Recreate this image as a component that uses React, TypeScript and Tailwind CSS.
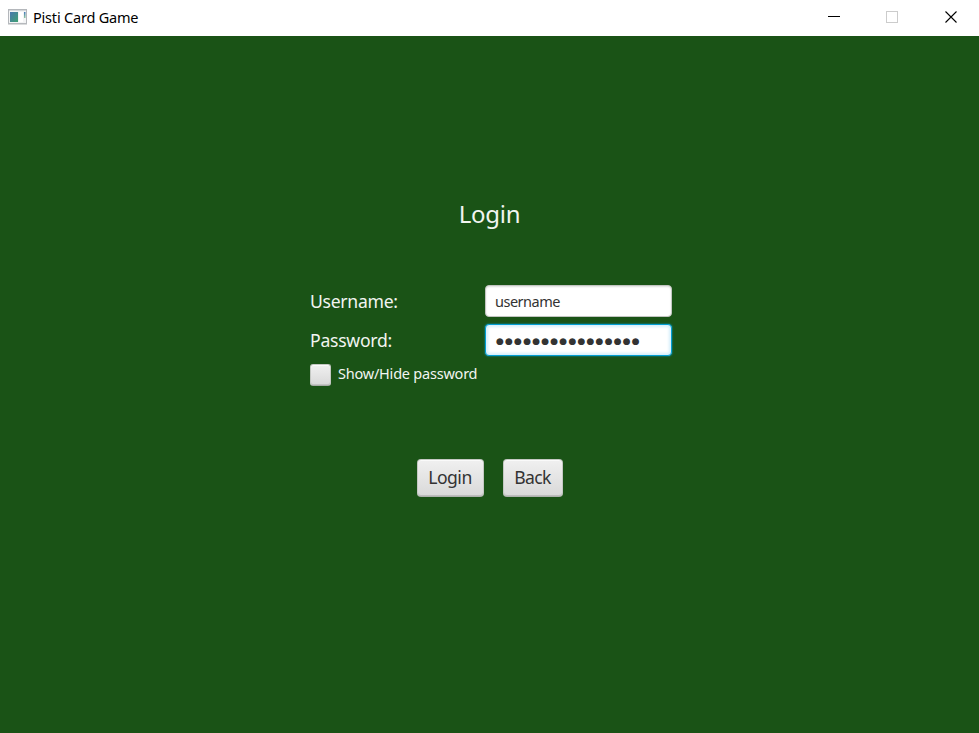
import type { ReactNode } from "react";

function AppIcon() {
  return (
    <svg width="20" height="16" viewBox="0 0 20 16" className="mb-[2px] ml-2 shrink-0">
      <defs>
        <linearGradient id="pane" x1="0" y1="0" x2="1" y2="1">
          <stop offset="0" stopColor="#4a78b0" />
          <stop offset="1" stopColor="#3fa072" />
        </linearGradient>
        <linearGradient id="strip" x1="0" y1="0" x2="0" y2="1">
          <stop offset="0" stopColor="#4478b8" />
          <stop offset="1" stopColor="#8fc8a0" />
        </linearGradient>
      </defs>
      <rect x="0.5" y="0.5" width="18" height="14" fill="#f3f4f5" stroke="#b4b7bb" />
      <path d="M1 1.5H18" stroke="#d4d7da" />
      <path d="M0 15.3H19" stroke="#c4c6c8" strokeWidth="0.8" />
      <rect x="2" y="3" width="8" height="10" fill="url(#pane)" />
      <rect x="11" y="3" width="4" height="10" fill="#ffffff" />
      <rect x="16" y="3" width="1.5" height="6" fill="url(#strip)" />
    </svg>
  );
}

function TitleBar() {
  return (
    <header className="flex h-9 items-center bg-white text-black">
      <AppIcon />
      <span className="mb-[2px] ml-[5px] whitespace-nowrap text-[14.5px] leading-5 tracking-[-0.2px]">
        Pisti Card Game
      </span>
      <svg width="130" height="12" viewBox="0 0 130 12" fill="none" className="mr-[21px] mb-[2px] ml-auto">
        <path d="M0 5.5H12" stroke="#000" />
        <rect x="58.5" y="0.5" width="11" height="11" stroke="#cccccc" />
        <path d="M117.5 0.5L128.5 11.5M128.5 0.5L117.5 11.5" stroke="#000" strokeWidth="1.1" />
      </svg>
    </header>
  );
}

function ActionButton({ children, className }: { children: ReactNode; className: string }) {
  return (
    <button
      className={`h-[38px] rounded-[4px] border border-[#c4c8c3] border-b-[#aeb2ad] bg-linear-to-b from-[#f0f0f0] to-[#d9d9d9] pb-px text-[17.6px] text-[#333] shadow-[inset_0_1px_0_#fafafa,inset_0_-1px_0_#bdbdbd] ${className}`}
    >
      {children}
    </button>
  );
}

export default function App() {
  return (
    <div className="flex h-[733px] w-[979px] flex-col overflow-hidden bg-[#1a5316] font-['Noto_Sans','Open_Sans',sans-serif]">
      <TitleBar />
      <main className="flex flex-1 flex-col items-center text-[#f2f5f1]">
        <h1 className="mt-[160px] h-9 text-[24px] leading-9 tracking-[-0.25px]">Login</h1>
        <div className="mt-[53px] ml-[3px] w-[362px]">
          <div className="flex h-8 items-center">
            <span className="w-[175px] text-[17.6px] tracking-[-0.28px]">Username:</span>
            <div className="flex h-8 w-[187px] items-center rounded-[4px] border border-[#c2c5c1] bg-white pt-px pl-[9px] text-[14.5px] tracking-[-0.5px] text-[#333] shadow-[inset_0_1px_2px_#ddd]">
              username
            </div>
          </div>
          <div className="mt-[7px] flex h-8 items-center">
            <span className="w-[175px] text-[17.6px] tracking-[-0.25px]">Password:</span>
            <div className="flex h-8 w-[187px] items-center rounded-[4px] border-[1.5px] border-[#039ed3] bg-white pt-[3px] pl-[10px] font-['DejaVu_Sans',sans-serif] text-[9px] text-[#333] shadow-[inset_0_0_3px_2px_#d5effa,0_0_2px_#039ed3]">
              <span className="tracking-[1.2px]">●●●●●●●●●●●●●●●●</span>
            </div>
          </div>
          <div className="mt-2 flex h-[22px] items-center">
            <span className="h-[22px] w-[21px] rounded-[3px] border border-[#c4c8c3] border-b-[#a7aca6] bg-linear-to-b from-[#f0f0f0] to-[#d9d9d9] shadow-[inset_0_1px_0_#fafafa,inset_0_-1px_0_#c3c3c3]" />
            <span className="ml-[7px] pb-[2px] text-[14.5px] tracking-[-0.22px]">Show/Hide password</span>
          </div>
        </div>
        <div className="mt-[73px] flex gap-[19px]">
          <ActionButton className="w-[67px] tracking-[-0.5px]">Login</ActionButton>
          <ActionButton className="w-[60px] tracking-[-0.7px]">Back</ActionButton>
        </div>
      </main>
    </div>
  );
}
